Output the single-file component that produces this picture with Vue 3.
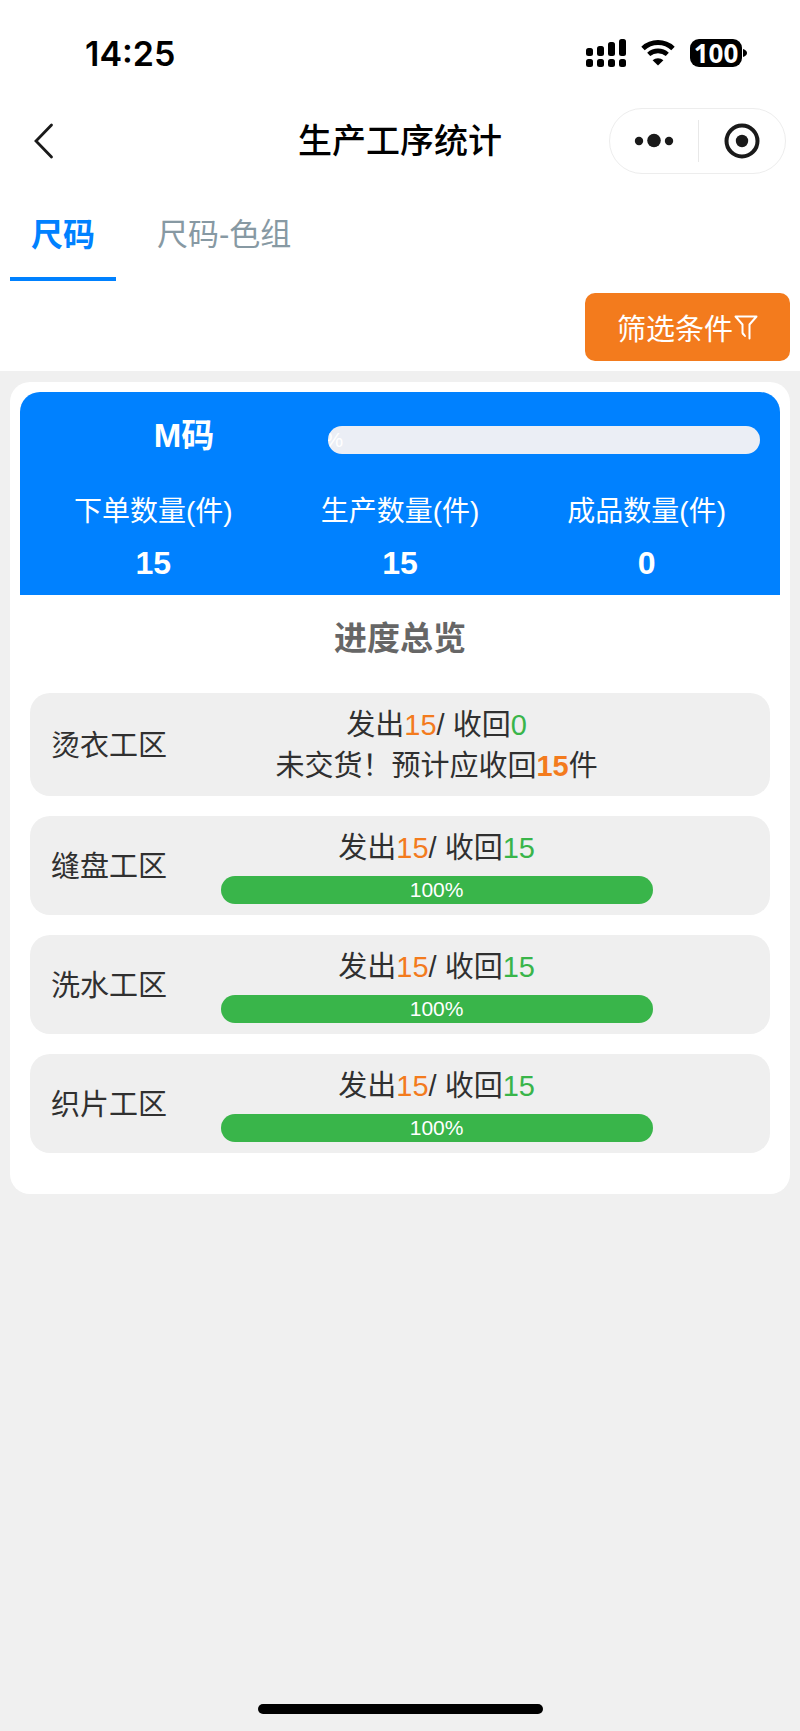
<script setup>
import { ref } from 'vue'

const tabs = ['尺码', '尺码-色组']
const activeTab = ref(0)

const signalBars = [
  { x: 0, y: 9, h: 8 },
  { x: 11, y: 7, h: 10 },
  { x: 22, y: 3, h: 14 },
  { x: 33, y: 0, h: 17 },
]

const sizeGroup = {
  name: 'M码',
  percent: 0,
  totals: [
    { label: '下单数量(件)', value: 15 },
    { label: '生产数量(件)', value: 15 },
    { label: '成品数量(件)', value: 0 },
  ],
}

const areas = [
  { name: '烫衣工区', sent: 15, received: 0, pending: 15 },
  { name: '缝盘工区', sent: 15, received: 15, percent: 100 },
  { name: '洗水工区', sent: 15, received: 15, percent: 100 },
  { name: '织片工区', sent: 15, received: 15, percent: 100 },
]
</script>

<template>
  <div class="page">
    <header class="top">
      <div class="status">
        <span class="time">14:25</span>
        <div class="indicators">
          <svg class="signal" width="40" height="28" viewBox="0 0 40 28" aria-hidden="true">
            <g v-for="bar in signalBars" :key="bar.x">
              <rect :x="bar.x" :y="bar.y" width="7" :height="bar.h" rx="2.5" />
              <rect :x="bar.x" y="20" width="7" height="8" rx="2.5" />
            </g>
          </svg>
          <svg class="wifi" width="36" height="28" viewBox="0 0 36 28" aria-hidden="true">
            <path d="M3 9.5A22 22 0 0 1 33 9.5" fill="none" stroke="#000" stroke-width="5" />
            <path d="M8.7 15.4A14 14 0 0 1 27.3 15.4" fill="none" stroke="#000" stroke-width="4.6" />
            <path d="M18 26.5L12.6 21.2A8.2 8.2 0 0 1 23.4 21.2Z" />
          </svg>
          <div class="battery">
            <span class="level">100</span>
            <svg width="5" height="8" viewBox="0 0 5 8" aria-hidden="true">
              <path d="M1 0Q5 1.5 5 4T1 8Z" />
            </svg>
          </div>
        </div>
      </div>

      <nav class="navbar">
        <button class="back" type="button" aria-label="返回">
          <svg width="20" height="36" viewBox="0 0 20 36" aria-hidden="true">
            <path d="M17.5 2L2 18L17.5 34" fill="none" stroke="#1a1a1a" stroke-width="2.8" stroke-linecap="round" />
          </svg>
        </button>
        <h1 class="title">生产工序统计</h1>
        <div class="capsule">
          <button type="button" aria-label="更多">
            <svg width="40" height="36" viewBox="0 0 40 36" aria-hidden="true">
              <circle cx="5" cy="18" r="4.2" />
              <circle cx="20" cy="17.5" r="6.8" />
              <circle cx="35" cy="18" r="4.2" />
            </svg>
          </button>
          <button type="button" aria-label="关闭">
            <svg width="36" height="36" viewBox="0 0 36 36" aria-hidden="true">
              <circle cx="18" cy="18" r="15.5" fill="none" stroke="#1a1a1a" stroke-width="4" />
              <circle cx="18" cy="18" r="6.2" />
            </svg>
          </button>
        </div>
      </nav>

      <div class="tabs" role="tablist">
        <button
          v-for="(tab, i) in tabs"
          :key="tab"
          type="button"
          role="tab"
          class="tab"
          :class="{ active: activeTab === i }"
          :aria-selected="activeTab === i"
          @click="activeTab = i"
        >{{ tab }}</button>
      </div>

      <div class="toolbar">
        <button class="filter" type="button">
          <span>筛选条件</span>
          <svg width="24" height="26" viewBox="0 0 24 26" aria-hidden="true">
            <path
              d="M9.5 20.5L8.5 19V10.5L1.5 2.5H22.5L15.5 10.5V24.5"
              fill="none"
              stroke="#fff"
              stroke-width="2"
              stroke-linecap="round"
              stroke-linejoin="round"
            />
            <path d="M9 19.5L11 22" stroke="#fff" stroke-width="2" stroke-linecap="round" />
          </svg>
        </button>
      </div>
    </header>

    <main class="card">
      <section class="summary">
        <div class="summary-head">
          <h2 class="size-name">{{ sizeGroup.name }}</h2>
          <div class="track" role="progressbar" :aria-valuenow="sizeGroup.percent" aria-valuemin="0" aria-valuemax="100">
            <div class="fill" :style="{ width: sizeGroup.percent + '%' }">
              <span>{{ sizeGroup.percent }}%</span>
            </div>
          </div>
        </div>
        <dl class="totals">
          <div v-for="total in sizeGroup.totals" :key="total.label">
            <dt>{{ total.label }}</dt>
            <dd>{{ total.value }}</dd>
          </div>
        </dl>
      </section>

      <h2 class="overview">进度总览</h2>

      <ul class="areas">
        <li v-for="area in areas" :key="area.name" class="area">
          <span class="area-name">{{ area.name }}</span>
          <div class="area-body">
            <p>发出<span class="orange">{{ area.sent }}</span>/ 收回<span class="green">{{ area.received }}</span></p>
            <p v-if="area.pending">未交货！预计应收回<b class="orange">{{ area.pending }}</b>件</p>
            <div v-else class="track" role="progressbar" :aria-valuenow="area.percent" aria-valuemin="0" aria-valuemax="100">
              <div class="fill" :style="{ width: area.percent + '%' }">
                <span>{{ area.percent }}%</span>
              </div>
            </div>
          </div>
        </li>
      </ul>
    </main>

    <div class="home-indicator"></div>
  </div>
</template>

<style>
body {
  margin: 0;
  background: #f0f0f0;
}
</style>

<style scoped>
.page {
  display: flex;
  flex-direction: column;
  min-height: 100vh;
  box-sizing: border-box;
  background: #f0f0f0;
  color: #303030;
  font-family: "Liberation Sans", "Noto Sans CJK SC", sans-serif;
  font-size: 29px;
}

button {
  margin: 0;
  padding: 0;
  border: 0;
  background: none;
  font-family: inherit;
  cursor: pointer;
}

h1,
h2,
p,
dl,
dd,
ul {
  margin: 0;
  padding: 0;
}

svg {
  display: block;
}

.top {
  background: #fff;
}

.status {
  display: flex;
  align-items: center;
  justify-content: space-between;
  height: 106px;
  padding: 0 53px 0 85px;
}

.time {
  color: #000;
  font-family: Inter, sans-serif;
  font-size: 34px;
  font-weight: 600;
}

.indicators {
  display: flex;
  align-items: center;
}

.wifi {
  margin: 0 14px;
}

.battery {
  display: flex;
  align-items: center;
}

.level {
  width: 52px;
  border-radius: 9px;
  background: #000;
  color: #fff;
  font-family: "Noto Sans", sans-serif;
  font-size: 26px;
  font-weight: 700;
  line-height: 28px;
  text-align: center;
}

.navbar {
  display: grid;
  grid-template-columns: 1fr auto 1fr;
  align-items: center;
  padding: 2px 14px 0;
}

.back {
  justify-self: start;
  padding-left: 20px;
}

.title {
  color: #000;
  font-size: 34px;
  font-weight: 500;
  line-height: 48px;
}

.capsule {
  display: grid;
  grid-template-columns: 1fr 1fr;
  justify-self: end;
  align-items: center;
  box-sizing: border-box;
  width: 177px;
  height: 66px;
  border: 1px solid #ededed;
  border-radius: 33px;
}

.capsule button {
  display: flex;
  align-items: center;
  justify-content: center;
  height: 42px;
  fill: #1a1a1a;
}

.capsule button + button {
  border-left: 1px solid #e8e8e8;
}

.tabs {
  display: flex;
  gap: 20px;
  height: 107px;
  padding: 0 10px;
}

.tab {
  padding: 18px 21px 0;
  border-bottom: 4px solid transparent;
  color: #8799a3;
  font-size: 31px;
  line-height: 40px;
}

.tab.active {
  border-color: #0081ff;
  color: #0081ff;
  font-size: 32px;
  font-weight: 700;
}

.toolbar {
  display: flex;
  justify-content: flex-end;
  padding: 12px 10px 10px;
}

.filter {
  display: flex;
  align-items: center;
  gap: 1px;
  height: 68px;
  padding: 0 32px;
  border-radius: 10px;
  background: #f37b1d;
  color: #fff;
  font-size: 29px;
}

.card {
  margin: 11px 10px;
  padding: 10px 10px 41px;
  border-radius: 20px;
  background: #fff;
}

.summary {
  padding: 20px 10px 8px;
  border-radius: 20px 20px 0 0;
  background: #0081ff;
  color: #fff;
}

.summary-head {
  display: grid;
  grid-template-columns: 2fr 3fr;
  align-items: center;
  height: 56px;
  padding: 0 10px;
}

.size-name {
  align-self: start;
  font-size: 33px;
  line-height: 48px;
  text-align: center;
}

.track {
  display: flex;
  overflow: hidden;
  height: 28px;
  border-radius: 14px;
  background: #ebeef5;
}

.fill {
  display: flex;
  justify-content: center;
  background: #39b54a;
  color: #fff;
  font-size: 21px;
  line-height: 28px;
}

.totals {
  display: grid;
  grid-template-columns: repeat(3, 1fr);
  padding-top: 16px;
  text-align: center;
}

.totals dt {
  font-size: 28px;
  line-height: 55px;
}

.totals dd {
  font-size: 32px;
  font-weight: 700;
  line-height: 48px;
}

.overview {
  padding: 20px 0 30px;
  color: #666;
  font-size: 33px;
  line-height: 48px;
  text-align: center;
}

.areas {
  display: flex;
  flex-direction: column;
  gap: 20px;
  padding: 0 10px;
  list-style: none;
}

.area {
  display: grid;
  grid-template-columns: 190fr 431fr 117fr;
  align-items: center;
  padding: 12px 0 9px;
  border-radius: 20px;
  background: #efefef;
}

.area-name {
  padding-left: 21px;
  line-height: 41px;
  white-space: nowrap;
}

.area-body {
  line-height: 41px;
  text-align: center;
  white-space: nowrap;
}

.area-body .track {
  margin: 7px 0 2px;
}

.orange {
  color: #f37b1d;
}

.green {
  color: #39b54a;
}

.home-indicator {
  width: 285px;
  height: 10px;
  margin: auto auto 17px;
  border-radius: 5px;
  background: #000;
}
</style>
